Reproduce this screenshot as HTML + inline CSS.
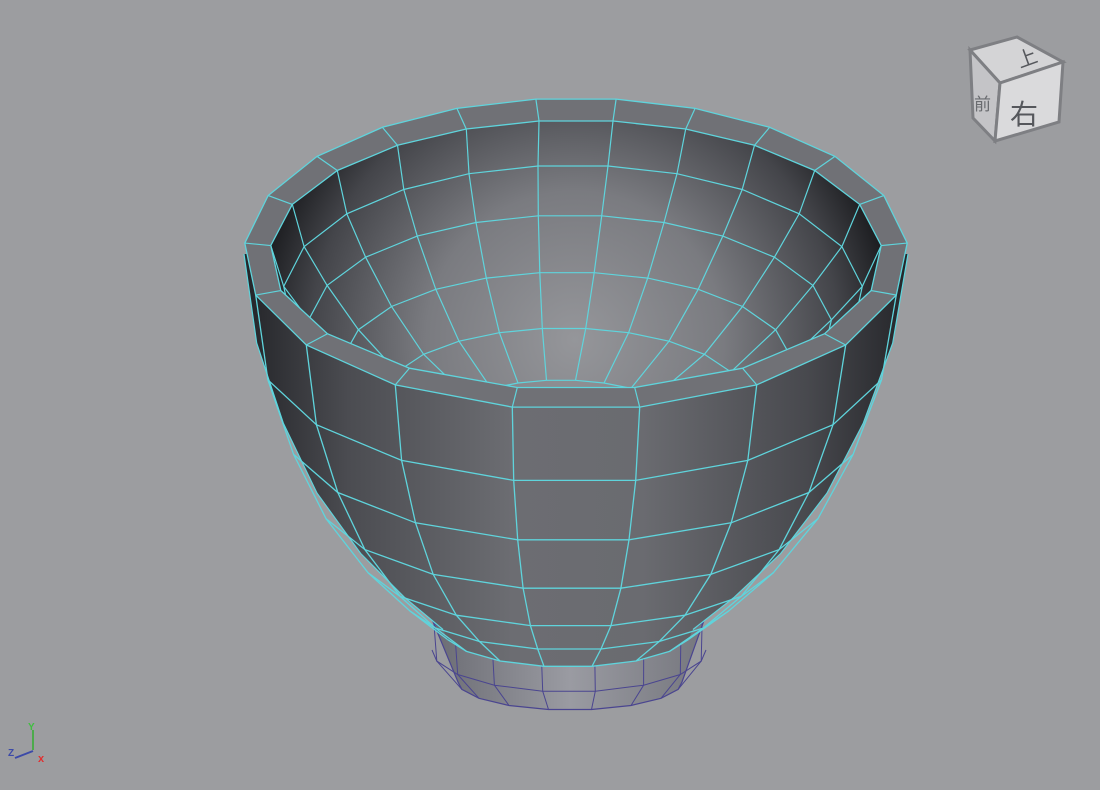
<!DOCTYPE html><html><head><meta charset="utf-8"><style>
html,body{margin:0;padding:0;background:#9c9da0;width:1100px;height:790px;overflow:hidden}
svg{display:block}
</style></head><body>
<svg id="s" width="1100" height="790" xmlns="http://www.w3.org/2000/svg">
<defs>
<linearGradient id="bodyG" x1="250" x2="905" y1="0" y2="0" gradientUnits="userSpaceOnUse">
<stop offset="0" stop-color="#26272b"/><stop offset="0.15" stop-color="#4b4c51"/><stop offset="0.4" stop-color="#6c6d72"/><stop offset="0.6" stop-color="#6a6b70"/><stop offset="0.85" stop-color="#48494e"/><stop offset="1" stop-color="#26272b"/>
</linearGradient>
<radialGradient id="inG" cx="575" cy="340" r="330" gradientUnits="userSpaceOnUse">
<stop offset="0" stop-color="#95969a"/><stop offset="0.45" stop-color="#7a7b80"/><stop offset="0.8" stop-color="#44454a"/><stop offset="1" stop-color="#151619"/>
</radialGradient>
<linearGradient id="footG" x1="430" x2="710" gradientUnits="userSpaceOnUse"><stop offset="0" stop-color="#6a6b72"/><stop offset="0.5" stop-color="#9a9ba2"/><stop offset="1" stop-color="#74757c"/></linearGradient>
</defs>
<g id="g"></g>
<polygon points="970,50 1017,37 1063,62 1000,83" fill="#d4d4d6" stroke="#7e7f83" stroke-width="3"/>
<polygon points="970,50 1000,83 995,141 973,118" fill="#c4c4c7" stroke="#7e7f83" stroke-width="3"/>
<polygon points="1000,83 1063,62 1059,122 995,141" fill="#dadadc" stroke="#7e7f83" stroke-width="3"/>
<text x="1020" y="68" font-family="Noto Sans CJK SC,sans-serif" font-size="20" fill="#55575c" transform="rotate(-20 1020 68)">上</text>
<text x="1010" y="124" font-family="Noto Sans CJK SC,sans-serif" font-size="28" fill="#55575c">右</text>
<text x="974" y="110" font-family="Noto Sans CJK SC,sans-serif" font-size="17" fill="#6a6c70">前</text>
<line x1="33" y1="750" x2="33" y2="730" stroke="#4caa4c" stroke-width="2"/>
<text x="28" y="730" font-family="Liberation Sans" font-size="10" fill="#3fbf3f" font-weight="bold">Y</text>
<line x1="33" y1="751" x2="15" y2="758" stroke="#3c4aa8" stroke-width="2"/>
<text x="8" y="756" font-family="Liberation Sans" font-size="10" fill="#3c4aa8" font-weight="bold">Z</text>
<text x="38" y="762" font-family="Liberation Sans" font-size="11" fill="#e03030" font-weight="bold">x</text>
</svg>
<script>
var g=document.getElementById('g'),NS='http://www.w3.org/2000/svg';
function el(t,a,par){var e=document.createElementNS(NS,t);for(var k in a)e.setAttribute(k,a[k]);(par||g).appendChild(e);return e}
var N=20,PI=Math.PI,C='#5fd4dc',A=0.23;
function phi(i){var t=PI/N+2*PI*i/N;return t+A*Math.sin(t)}
function Pp(e,f){return [e.cx-e.rx*Math.sin(f),e.cy+e.ry*Math.cos(f)]}
function P(e,i){return Pp(e,phi(i))}
function poly(p){return p.map(function(q){return q[0].toFixed(1)+','+q[1].toFixed(1)}).join(' ')}
function ring(e){var p=[];for(var i=0;i<N;i++)p.push(P(e,i));return p}
var FI=[];for(var i=-N/2;i<N/2;i++){var f=phi(i);if(Math.cos(f)>0)FI.push(i)}
FI.sort(function(a,b){return phi(a)-phi(b)});
function frontArc(e){var p=[[e.cx+e.rx,e.cy]];FI.forEach(function(i){p.push(P(e,i))});p.push([e.cx-e.rx,e.cy]);return p}
// foot
var f1={cx:568,cy:612,rx:139,ry:42},f2={cx:569,cy:650,rx:137,ry:42},f3={cx:570,cy:682,rx:112,ry:28};
var a=frontArc(f1),b=frontArc(f2),c=frontArc(f3);
el('polygon',{points:poly(a.concat(c.slice().reverse())),fill:'url(#footG)',stroke:'#4a4590','stroke-width':1.2});
el('polyline',{points:poly(b),fill:'none',stroke:'#4a4590','stroke-width':1});
FI.forEach(function(i){el('polyline',{points:poly([P(f1,i),P(f2,i),P(f3,i)]),fill:'none',stroke:'#4a4590','stroke-width':1})});
// body rows
var rows=[[332,410,.47],[318,483,.44],[290,542,.41],[255,590,.38],[210,627,.35],[165,650,.32],[125,667,.30]].map(function(r,k){var ry=r[0]*r[2];return {cx:576-8*k/6,cy:r[1]-ry,rx:r[0],ry:ry}});
var L=rows.map(function(e){return [e.cx-e.rx,e.cy]}),R=rows.map(function(e){return [e.cx+e.rx,e.cy]});
var last=frontArc(rows[6]);
el('polygon',{points:poly(R.concat(last.slice(1,-1)).concat(L.slice().reverse())),fill:'url(#bodyG)'});
rows.forEach(function(e,k){if(k>0)el('polyline',{points:poly(frontArc(e).slice(1,-1)),fill:'none',stroke:C,'stroke-width':1.3})});
FI.forEach(function(i){var p=rows.map(function(e){return P(e,i)});el('polyline',{points:poly(p),fill:'none',stroke:C,'stroke-width':1.3})});
el('polyline',{points:poly(L),fill:'none',stroke:C,'stroke-width':1.2});
el('polyline',{points:poly(R),fill:'none',stroke:C,'stroke-width':1.2});
// rim
var o={cx:576,cy:254,rx:332,ry:156},ic={cx:576,cy:255,rx:306,ry:135};
el('polygon',{points:poly(ring(o)),fill:'#707176',stroke:C,'stroke-width':1.3});
el('polygon',{points:poly(ring(ic)),fill:'url(#inG)',stroke:C,'stroke-width':1.3});
for(var i=0;i<N;i++){var p1=P(o,i),p2=P(ic,i);el('line',{x1:p1[0],y1:p1[1],x2:p2[0],y2:p2[1],stroke:C,'stroke-width':1.2})}
// inner
var cp=el('clipPath',{id:'ic'},document.querySelector('defs'));el('polygon',{points:poly(ring(ic))},cp);
var ig=el('g',{'clip-path':'url(#ic)'});
var tops=[165,215,272,328,380],rxs=[290,262,225,180,120];
var IR=[ic].concat(tops.map(function(t,k){var ry=rxs[k]*(0.45-0.02*k);return {cx:576-3*(k+1),cy:t+ry,rx:rxs[k],ry:ry}}));
IR.forEach(function(e,k){if(k>0)el('polygon',{points:poly(ring(e)),fill:'none',stroke:C,'stroke-width':1.2},ig)});
for(var i=0;i<N;i++){var p=IR.map(function(e){return P(e,i)});el('polyline',{points:poly(p),fill:'none',stroke:C,'stroke-width':1.2},ig)}
</script>
</body></html>
